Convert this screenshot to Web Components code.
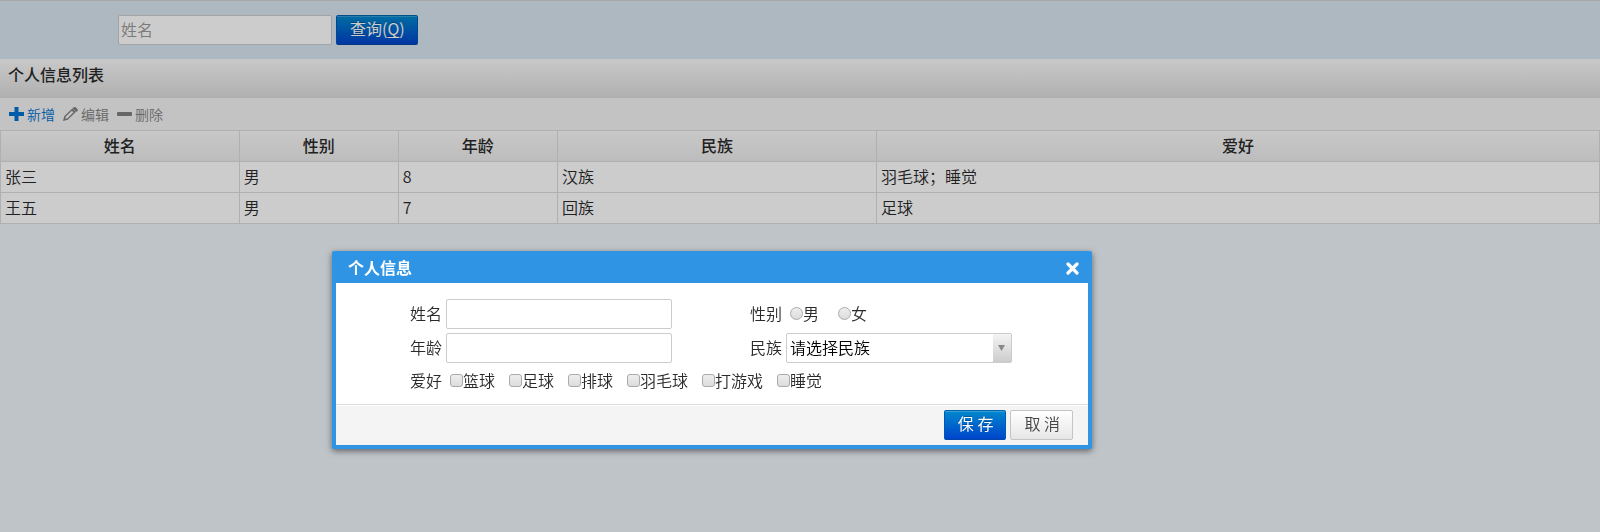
<!DOCTYPE html>
<html lang="zh-CN">
<head>
<meta charset="utf-8">
<title>个人信息列表</title>
<style>
  html { background: #eff5fa; }
  body { margin: 0; font: 350 16px/20px "Noto Sans CJK SC", "Noto Sans", sans-serif; color: #2a2a2a; }
</style>
</head>
<body>
<info-page></info-page>
<script>
const define = (name, html, setup) => {
  const template = document.createElement('template');
  template.innerHTML = '<style>*{box-sizing:border-box}</style>' + html;
  customElements.define(name, class extends HTMLElement {
    constructor() {
      super();
      this.attachShadow({ mode: 'open' }).append(template.content.cloneNode(true));
      if (setup) setup(this, this.shadowRoot);
    }
  });
};

define('ui-button', `
<style>
  :host { display: inline-block; }
  button { display: block; height: 30px; padding: 0 12px 4px 13px; border: 1px solid #c4c4c4; border-radius: 2px;
    background: linear-gradient(#fff, #e6e6e6); color: #444; font: inherit; line-height: 24px; white-space: pre; }
  :host([primary]) button { color: #fff; border-color: #0064ae #0058b8 #0046a8; font-weight: 400;
    background: linear-gradient(#08c, #04c); text-shadow: 0 -1px 0 rgba(0,0,0,.25);
    box-shadow: inset 0 1px 0 rgba(255,255,255,.2); }
</style>
<button type="button"><slot></slot></button>`);

define('search-bar', `
<style>
  :host { display: block; border-top: 1px solid #d4d4d4; background: #d9e6f1; }
  form { display: flex; gap: 4px; padding: 14px 0 14px 118px; }
  input { width: 214px; height: 30px; padding: 0 2px 2px; border: 1px solid #ccc; border-radius: 2px;
    background: #fff; font: inherit; color: #333; }
  input::placeholder { color: #999; opacity: 1; }
  u { text-decoration-thickness: 1px; text-underline-offset: 2px; text-decoration-skip-ink: none; }
</style>
<form><input type="text" placeholder="姓名" aria-label="姓名"><ui-button primary>查询(<u>Q</u>)</ui-button></form>`);

define('tool-link', `
<style>
  :host { display: block; color: #808080; font-size: 14px; }
  :host([active]) { color: #0072d2; }
  a { display: flex; align-items: center; gap: 3px; color: inherit; text-decoration: none; }
  ::slotted(svg) { display: block; width: 15px; height: 14px; fill: currentColor; }
</style>
<a href="#"><slot name="icon"></slot><slot></slot></a>`);

define('list-panel', `
<style>
  :host { display: block; }
  h1 { margin: 0; padding: 5px 8px 14px; background: linear-gradient(#fbfbfb, #dcdcdc);
    font-size: 16px; line-height: 20px; font-weight: 500; }
  nav { display: flex; gap: 8px; padding: 6px 9px; background: #f4f4f4; }
</style>
<h1>个人信息列表</h1>
<nav>
  <tool-link active><svg slot="icon" viewBox="0 0 15 14"><path d="M5.500 0h4v5H15v4H9.500v5h-4V9H0V5h5.500z"/></svg>新增</tool-link>
  <tool-link><svg slot="icon" viewBox="0 0 15 14"><path fill-rule="evenodd" d="M0 14l1.200-4.800L9.300 1.400 12.800 5l-8 7.800zM2.800 9.600l-.6 2.200 2.300-.6 6-5.900-1.600-1.500zM10 .8c1.100-1 2.300-1 3.200-.1l1 1c.8.9.8 1.800-.1 2.800l-.7.5L9.500 1.300z"/></svg>编辑</tool-link>
  <tool-link><svg slot="icon" viewBox="0 0 15 14"><rect y="5" width="15" height="4" rx="1"/></svg>删除</tool-link>
</nav>
<slot></slot>`);

define('info-table', `
<style>
  :host { display: block; }
  table { width: 100%; table-layout: fixed; border-collapse: collapse; background: #fff; }
  th, td { height: 31px; padding: 0 4px 2px; border: 1px solid #dcdcdc; text-align: left; line-height: 28px; }
  thead tr { background: linear-gradient(#fafafa, #ececec); }
  th { font-weight: 500; text-align: center; }
  .w15 { width: 14.93% } .w10 { width: 9.95% } .w20 { width: 19.95% }
</style>
<table>
  <colgroup><col class="w15"><col class="w10"><col class="w10"><col class="w20"><col></colgroup>
  <thead><tr><th>姓名</th><th>性别</th><th>年龄</th><th>民族</th><th>爱好</th></tr></thead>
  <tbody>
    <tr><td>张三</td><td>男</td><td>8</td><td>汉族</td><td>羽毛球；睡觉</td></tr>
    <tr><td>王五</td><td>男</td><td>7</td><td>回族</td><td>足球</td></tr>
  </tbody>
</table>`);

define('check-item', `
<style>
  :host { display: block; }
  label { display: flex; align-items: center; }
  input { appearance: none; width: 13px; height: 13px; margin: 0; border: 1px solid #aaa; border-radius: 3px;
    background: linear-gradient(#eee, #dcdcdc); }
  input[type=radio] { border-radius: 50%; }
</style>
<label><input type="checkbox"><slot></slot></label>`, (host, root) => {
  const input = root.querySelector('input');
  if (host.hasAttribute('radio')) input.type = 'radio';
});

define('info-form', `
<style>
  :host { display: block; }
  form { display: grid; grid-template-columns: 340px 1fr; row-gap: 4px; padding: 16px 16px 9px 74px; }
  .row { display: flex; align-items: center; height: 30px; gap: 4px; }
  .row > label, .row > span, .items { padding-bottom: 2px; }
  .row.wide { grid-column: 1 / -1; height: 28px; }
  .items { display: flex; gap: 14px; padding-left: 4px; }
  .radios { gap: 19px; }
  .control { width: 226px; height: 30px; border: 1px solid #ccc; border-radius: 2px; background: #fff; font: inherit; }
  select.control { appearance: none; padding: 0 3px 2px; color: #000;
    background: url("data:image/svg+xml,%3Csvg xmlns='http://www.w3.org/2000/svg' width='7' height='6'%3E%3Cpath d='M0 0h7L3.5 6z' fill='%23888'/%3E%3C/svg%3E") right 6px center no-repeat,
      linear-gradient(#f4f4f4, #ccc) right / 18px 100% no-repeat, #fff; }
</style>
<form>
  <div class="row"><label for="name">姓名</label><input class="control" id="name" type="text"></div>
  <div class="row"><span>性别</span><div class="items radios" role="radiogroup" aria-label="性别"><check-item radio>男</check-item><check-item radio>女</check-item></div></div>
  <div class="row"><label for="age">年龄</label><input class="control" id="age" type="text"></div>
  <div class="row"><label for="nation">民族</label><select class="control" id="nation"><option>请选择民族</option></select></div>
  <div class="row wide"><span>爱好</span><div class="items" role="group" aria-label="爱好"><check-item>篮球</check-item><check-item>足球</check-item><check-item>排球</check-item><check-item>羽毛球</check-item><check-item>打游戏</check-item><check-item>睡觉</check-item></div></div>
</form>`);

define('info-dialog', `
<style>
  :host { position: absolute; left: 332px; top: 251px; width: 760px; border: 4px solid #2f94e4; border-top: 0;
    border-radius: 2px; background: #fff; box-shadow: 0 2px 6px rgba(0,0,0,.5); }
  header { display: flex; justify-content: space-between; align-items: center; height: 32px; padding: 0 9px 0 12px;
    background: #2f94e4; color: #fff; }
  h2 { margin: 0; font-size: 16px; line-height: 20px; font-weight: 700; }
  .close { display: flex; padding: 2px 0 0; border: 0; background: none; }
  footer { display: flex; justify-content: flex-end; gap: 4px; margin-top: 1px; padding: 4px 15px 5px;
    background: #f4f4f4; }
  .rule { border-top: 1px solid #dcdcdc; }
</style>
<header><h2>个人信息</h2><button class="close" type="button" aria-label="关闭"><svg width="13" height="13" viewBox="0 0 13 13"><path d="M2 2l9 9M11 2l-9 9" stroke="#fff" stroke-width="3.200" stroke-linecap="round"/></svg></button></header>
<info-form></info-form>
<div class="rule"></div>
<footer><ui-button primary>保 存</ui-button><ui-button>取 消</ui-button></footer>`);

define('info-page', `
<style>
  :host { display: block; min-height: 100vh; }
  .mask { position: fixed; inset: 0; background: rgba(0,0,0,.2); }
</style>
<search-bar></search-bar>
<list-panel><info-table></info-table></list-panel>
<div class="mask"></div>
<info-dialog role="dialog" aria-label="个人信息"></info-dialog>`);
</script>
</body>
</html>
